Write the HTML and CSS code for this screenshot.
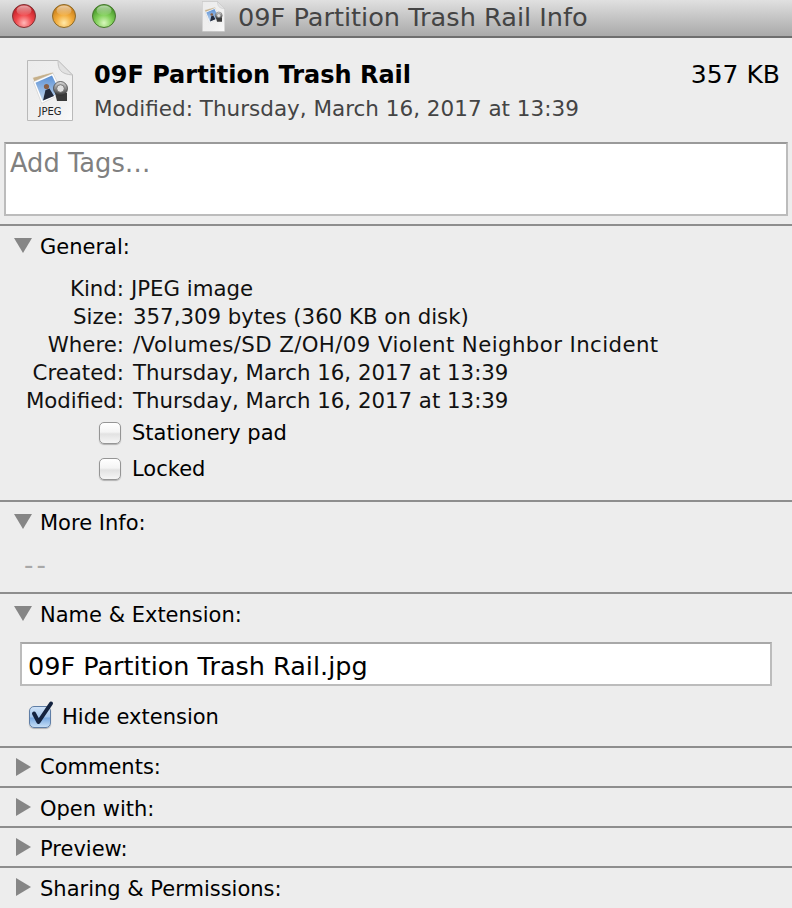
FILE: index.html
```html
<!DOCTYPE html>
<html lang="en">
<head>
<meta charset="utf-8">
<title>09F Partition Trash Rail Info</title>
<link rel="stylesheet" href="styles.css">
</head>
<body>
<svg class="defs" width="0" height="0" aria-hidden="true">
  <defs>
    <radialGradient id="redBall" cx="50%" cy="80%" r="65%"><stop offset="0" stop-color="#ffb8b8"/><stop offset=".55" stop-color="#f0484c"/><stop offset="1" stop-color="#c8262c"/></radialGradient>
    <radialGradient id="amberBall" cx="50%" cy="80%" r="65%"><stop offset="0" stop-color="#ffe9a8"/><stop offset=".55" stop-color="#f2ac3c"/><stop offset="1" stop-color="#cf8520"/></radialGradient>
    <radialGradient id="greenBall" cx="50%" cy="80%" r="65%"><stop offset="0" stop-color="#d8f7bc"/><stop offset=".55" stop-color="#80cf58"/><stop offset="1" stop-color="#4f9e30"/></radialGradient>
    <linearGradient id="shine" x1="0" y1="0" x2="0" y2="1"><stop offset="0" stop-color="#fff" stop-opacity=".6"/><stop offset="1" stop-color="#fff" stop-opacity=".05"/></linearGradient>
    <linearGradient id="paper" x1="0" y1="0" x2="1" y2="1"><stop offset="0" stop-color="#ececec"/><stop offset=".7" stop-color="#f0f0f0"/><stop offset="1" stop-color="#fafafa"/></linearGradient>
    <linearGradient id="sky" x1="0" y1="0" x2="0" y2="1"><stop offset="0" stop-color="#5a90d4"/><stop offset="1" stop-color="#c4d8ee"/></linearGradient>
    <linearGradient id="lens" x1="0" y1="0" x2="0" y2="1"><stop offset="0" stop-color="#e0e0e0"/><stop offset="1" stop-color="#333"/></linearGradient>
    <symbol id="docIcon" viewBox="0 0 46 61">
      <path d="M.5 .5H31L45.500 15V60.500H.5Z" fill="url(#paper)" stroke="#b9b9b9"/>
      <path d="M31 .5C31 9 33 14 45.500 15L31 .5Z" fill="#e2e2e2" stroke="#c4c4c4"/>
      <path d="M5.500 17.500L26 12L30 24L11 34Z" fill="#c6b08a" stroke="#f2f2f2" stroke-width=".7"/>
      <path d="M6.300 21.700L26 13.300L35.600 33.300L14.700 43.300Z" fill="#fff" stroke="#c4c4c4" stroke-width=".5"/>
      <path d="M8.500 22.700L25 15.500L33.300 32.500L15.700 41Z" fill="url(#sky)"/>
      <path d="M16 40.500L18.500 30L22.500 28.500L27 36Z" fill="#232a3a"/>
      <circle cx="19.500" cy="26.500" r="2.600" fill="#8a5f45"/>
      <path d="M28 33H40V41H30Z" fill="#3a3a3a"/>
      <circle cx="33.500" cy="28.500" r="7" fill="url(#lens)" stroke="#333" stroke-width=".7"/>
      <circle cx="33.500" cy="28.500" r="3.800" fill="#e0e0e0" stroke="#666" stroke-width=".8"/>
    </symbol>
  </defs>
</svg>
<main class="window">
  <header class="titlebar">
    <div class="lights">
      <svg class="light" viewBox="0 0 24 24"><circle cx="12" cy="12" r="11.500" fill="url(#redBall)" stroke="#7d3436"/><ellipse cx="12" cy="6.500" rx="7.500" ry="5" fill="url(#shine)"/></svg>
      <svg class="light" viewBox="0 0 24 24"><circle cx="12" cy="12" r="11.500" fill="url(#amberBall)" stroke="#8a6a2c"/><ellipse cx="12" cy="6.500" rx="7.500" ry="5" fill="url(#shine)"/></svg>
      <svg class="light" viewBox="0 0 24 24"><circle cx="12" cy="12" r="11.500" fill="url(#greenBall)" stroke="#47752f"/><ellipse cx="12" cy="6.500" rx="7.500" ry="5" fill="url(#shine)"/></svg>
    </div>
    <div class="window-title">
      <svg class="title-icon"><use href="#docIcon"/></svg>
      <span class="title-text">09F Partition Trash Rail Info</span>
    </div>
  </header>

  <section class="summary">
    <div class="file-icon">
      <svg class="file-doc"><use href="#docIcon"/></svg>
      <span class="file-badge">JPEG</span>
    </div>
    <div class="summary-text">
      <div class="summary-top">
        <h1 class="file-name">09F Partition Trash Rail</h1>
        <span class="file-size">357 KB</span>
      </div>
      <p class="file-date">Modified: Thursday, March 16, 2017 at 13:39</p>
    </div>
  </section>

  <div class="tags">Add Tags…</div>

  <section class="panel panel-general">
    <h2 class="disclosure"><span class="arrow-down"></span><span class="label">General:</span></h2>
    <dl class="facts">
      <dt>Kind:</dt><dd class="fact-kind">JPEG image</dd>
      <dt>Size:</dt><dd>357,309 bytes (360 KB on disk)</dd>
      <dt>Where:</dt><dd class="fact-wide">/Volumes/SD Z/OH/09 Violent Neighbor Incident</dd>
      <dt>Created:</dt><dd>Thursday, March 16, 2017 at 13:39</dd>
      <dt>Modified:</dt><dd>Thursday, March 16, 2017 at 13:39</dd>
    </dl>
    <div class="options">
      <label class="option"><span class="check"></span>Stationery pad</label>
      <label class="option"><span class="check"></span>Locked</label>
    </div>
  </section>

  <section class="panel panel-more">
    <h2 class="disclosure"><span class="arrow-down"></span><span class="label">More Info:</span></h2>
    <p class="empty">--</p>
  </section>

  <section class="panel panel-name">
    <h2 class="disclosure"><span class="arrow-down"></span><span class="label">Name &amp; Extension:</span></h2>
    <div class="name-field">09F Partition Trash Rail.jpg</div>
    <label class="option option-hide">
      <span class="check check-on">
        <svg class="tick" viewBox="0 0 26 28"><path d="M5 14.500L9.500 23L22 4.500" fill="none" stroke="#14233f" stroke-width="4" stroke-linecap="round" stroke-linejoin="round"/></svg>
      </span>Hide extension
    </label>
  </section>

  <section class="panel panel-closed"><h2 class="disclosure"><span class="arrow-right"></span>Comments:</h2></section>
  <section class="panel panel-closed"><h2 class="disclosure"><span class="arrow-right"></span><span class="label">Open with:</span></h2></section>
  <section class="panel panel-closed"><h2 class="disclosure"><span class="arrow-right"></span><span class="label">Preview:</span></h2></section>
  <section class="panel panel-closed panel-last"><h2 class="disclosure"><span class="arrow-right"></span><span class="label">Sharing &amp; Permissions:</span></h2></section>
</main>
</body>
</html>
```

FILE: styles.css
```css
* { box-sizing: border-box; }
html, body { margin: 0; height: 100%; }
body {
  background: #ededed;
  color: #000;
  font-family: "DejaVu Sans", sans-serif;
  font-size: 21px;
  overflow: hidden;
}
.defs { position: absolute; }
.window { width: 792px; height: 908px; overflow: hidden; }

.titlebar {
  height: 38px;
  display: flex;
  align-items: center;
  padding-bottom: 4px;
  background: linear-gradient(#e0e0e0, #a9a9a9);
  border-bottom: 2px solid #6e6e6e;
}
.lights { display: flex; gap: 16px; padding-left: 12px; }
.light { width: 24px; height: 24px; display: block; }
.window-title {
  display: flex;
  align-items: center;
  gap: 13px;
  margin-left: 86px;
  color: #444;
  font-size: 25.6px;
  white-space: nowrap;
}
.title-icon { width: 23px; height: 31px; }
.title-text { padding-top: 1px; }

.summary {
  display: flex;
  height: 104px;
  padding: 22px 12px 0 27px;
}
.file-icon { position: relative; width: 46px; height: 61px; margin-right: 21px; }
.file-doc { width: 46px; height: 61px; display: block; }
.file-badge {
  position: absolute;
  left: 0; right: 0; bottom: 3px;
  text-align: center;
  font-size: 10px;
  line-height: 12px;
  color: #222;
}
.summary-text { flex: 1; }
.summary-top { display: flex; justify-content: space-between; align-items: baseline; }
.file-name { margin: 0; font-size: 24px; line-height: 30px; font-weight: 700; }
.file-size { font-size: 25px; line-height: 30px; }
.file-date { margin: 5px 0 0; color: #444; font-size: 21.5px; line-height: 28px; }

.tags {
  height: 74px;
  margin: 0 4px 8px;
  padding: 4px 4px;
  background: #fff;
  border: 2px solid #bcbcbc;
  border-top-color: #9a9a9a;
  color: #808080;
  font-size: 25.7px;
  line-height: 30px;
}

.panel { border-top: 2px solid #8e8e8e; }
.disclosure {
  display: flex;
  align-items: center;
  margin: 0;
  height: 38px;
  font-size: 21px;
  font-weight: 400;
  white-space: nowrap;
}
.label { padding-top: 4px; }
.arrow-down {
  width: 0; height: 0;
  margin: 0 8px 0 14px;
  border-left: 9px solid transparent;
  border-right: 9px solid transparent;
  border-top: 15px solid #868686;
}
.arrow-right {
  width: 0; height: 0;
  margin: 0 9px 0 16px;
  border-top: 9px solid transparent;
  border-bottom: 9px solid transparent;
  border-left: 15px solid #868686;
}

.panel-general { height: 276px; }
.facts {
  display: grid;
  grid-template-columns: 124px 1fr;
  column-gap: 9px;
  grid-auto-rows: 28px;
  align-items: center;
  margin: 10px 0 1px;
  font-size: 21.3px;
}
.facts dt { text-align: right; color: #111; white-space: nowrap; }
.facts dd { margin: 0; color: #111; white-space: nowrap; }
.facts .fact-kind { margin-left: -2px; }
.facts .fact-wide { letter-spacing: .4px; }
.options { padding-left: 99px; }
.option { display: flex; align-items: center; height: 36px; gap: 11px; }
.check {
  position: relative;
  flex: none;
  width: 22px; height: 22px;
  border: 1px solid #959595;
  border-radius: 5px;
  background: linear-gradient(#fff 0%, #f4f4f4 45%, #e2e2e2 55%, #f6f6f6 100%);
  box-shadow: 0 1px 1px rgba(0,0,0,.25);
}
.check-on {
  border-color: #5f7ea6;
  background: linear-gradient(#cfe2f7 0%, #a4c6ec 50%, #79a9e0 55%, #c5def6 100%);
}
.tick { position: absolute; left: -1px; top: -8px; width: 26px; height: 28px; }

.panel-more { height: 92px; }
.empty { margin: 10px 0 0 24px; color: #a8a8a8; font-size: 26px; line-height: 30px; letter-spacing: 3px; }

.panel-name { height: 154px; }
.name-field {
  height: 44px;
  margin: 10px 20px 0;
  padding-left: 6px;
  background: #fff;
  border: 2px solid #bcbcbc;
  border-top-color: #a8a8a8;
  font-size: 25.5px;
  line-height: 44px;
}
.option-hide { padding-left: 29px; margin-top: 13px; }

.panel-closed { height: 40px; }
.panel-last { height: 41px; }
```
